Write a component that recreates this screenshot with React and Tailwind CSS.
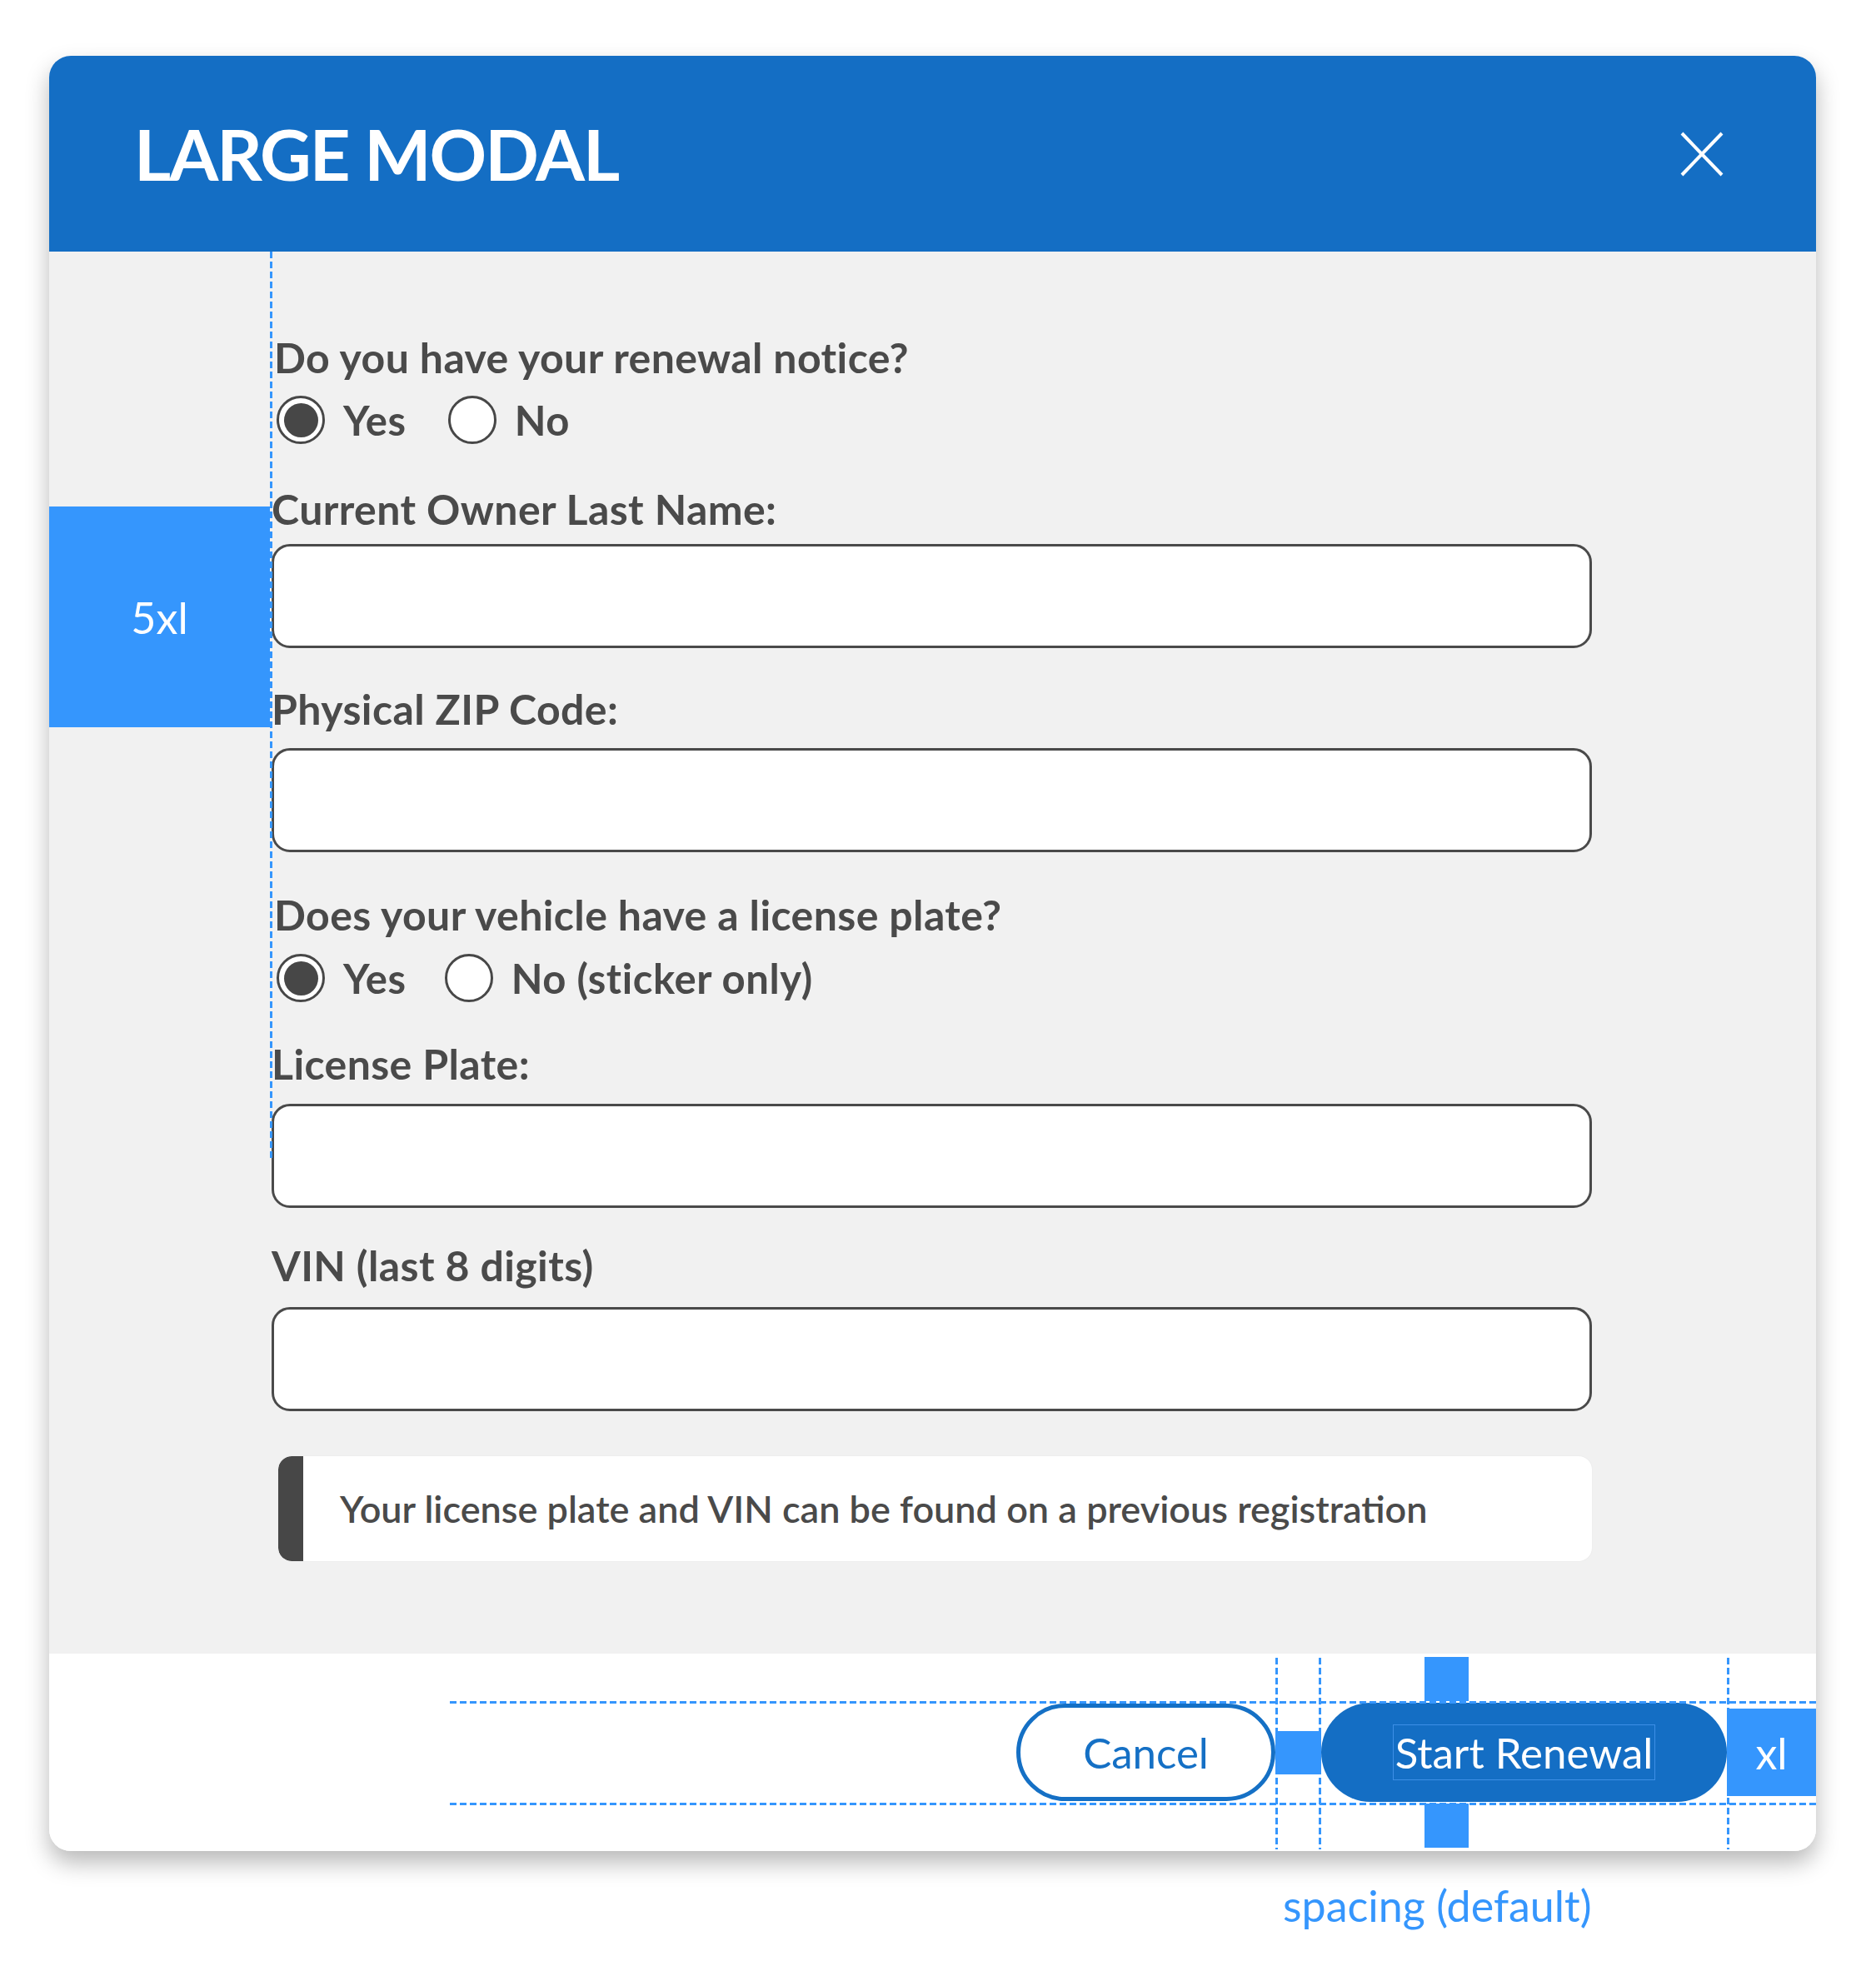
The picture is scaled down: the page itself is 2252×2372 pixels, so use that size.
import React from "react";

const Radio = ({ checked, label }) => (
  <div className="flex items-center gap-[22px]">
    <div className="w-[58px] h-[58px] rounded-full border-[3px] border-[#474747] bg-white flex items-center justify-center shrink-0">
      {checked && <div className="w-[41px] h-[41px] rounded-full bg-[#474747]" />}
    </div>
    <span className="text-[49px] leading-none font-bold tracking-[0.6px] text-[#4a4a4a]">{label}</span>
  </div>
);

const Label = ({ children, className = "" }) => (
  <div className={"text-[50px] leading-none font-bold tracking-[0.4px] text-[#4a4a4a] whitespace-nowrap " + className}>
    {children}
  </div>
);

const Input = ({ className = "" }) => (
  <div className={"h-[125px] w-full bg-white border-[3px] border-[#4a4a4a] rounded-[22px] " + className} />
);

const vDash =
  "absolute w-[3px] bg-[repeating-linear-gradient(to_bottom,#3596fd_0_8px,transparent_8px_12px)]";
const hDash =
  "absolute h-[3px] bg-[repeating-linear-gradient(to_right,#3596fd_0_8px,transparent_8px_12px)]";

export default function App() {
  return (
    <div className="w-[2252px] h-[2372px] bg-white flex flex-col pt-[67px] pl-[59px] font-[Lato,'Noto_Sans',sans-serif]">
      <div className="relative w-[2121px] h-[2155px] rounded-[26px] shadow-[0_14px_28px_rgba(0,0,0,0.28)] flex flex-col overflow-hidden">
        {/* Header */}
        <div className="h-[235px] shrink-0 bg-[#146ec4] flex items-center justify-between pl-[102px] pr-[111px]">
          <h1 className="text-[85px] leading-none font-bold text-white tracking-[-2px]">LARGE MODAL</h1>
          <svg width="52" height="54" viewBox="0 0 52 54" className="shrink-0">
            <line x1="2" y1="2" x2="50" y2="52" stroke="white" strokeWidth="4" />
            <line x1="50" y1="2" x2="2" y2="52" stroke="white" strokeWidth="4" />
          </svg>
        </div>

        {/* Body */}
        <div className="flex-1 bg-[#f1f1f1] flex flex-col pt-[102px] pl-[267px] pr-[269px]">
          <Label className="ml-[3px]">Do you have your renewal notice?</Label>
          <div className="mt-[21px] flex items-center gap-[50px] pl-[6px]">
            <Radio checked label="Yes" />
            <Radio label="No" />
          </div>
          <Label className="mt-[53px]">Current Owner Last Name:</Label>
          <Input className="mt-[17px]" />
          <Label className="mt-[48px]">Physical ZIP Code:</Label>
          <Input className="mt-[22px]" />
          <Label className="mt-[50px] ml-[3px]">Does your vehicle have a license plate?</Label>
          <div className="mt-[22px] flex items-center gap-[46px] pl-[6px]">
            <Radio checked label="Yes" />
            <Radio label="No (sticker only)" />
          </div>
          <Label className="mt-[49px]">License Plate:</Label>
          <Input className="mt-[23px]" />
          <Label className="mt-[44px]">VIN (last 8 digits)</Label>
          <Input className="mt-[25px]" />
          <div className="mt-[54px] ml-[8px] h-[126px] bg-white rounded-[16px] flex items-center overflow-hidden shadow-[0_0_2px_rgba(0,0,0,0.06)]">
            <div className="w-[30px] h-full bg-[#474747] rounded-l-[16px] shrink-0" />
            <span className="ml-[44px] text-[45px] leading-none font-semibold text-[#4a4a4a] whitespace-nowrap">
              Your license plate and VIN can be found on a previous registration
            </span>
          </div>
        </div>

        {/* Footer */}
        <div className="relative h-[237px] shrink-0 bg-white flex items-center justify-end">
          <button className="w-[311px] h-[117px] rounded-full border-[5px] border-[#1570c5] bg-white text-[#1570c5] text-[51px] leading-none flex items-center justify-center">
            Cancel
          </button>
          <div className="w-[55px] h-[52px] bg-[#3596fd]" />
          <button className="w-[487px] h-[119px] rounded-full bg-[#146ec4] text-white text-[51px] leading-none flex items-center justify-center">
            <span className="border border-[#3d8fe6] px-[2px] py-[7px]">Start Renewal</span>
          </button>
          <div className="w-[107px] h-[105px] bg-[#3596fd] text-white text-[52px] leading-none flex items-center justify-center">
            xl
          </div>

          {/* footer annotations */}
          <div className={hDash + " left-[481px] right-0 top-[57px]"} />
          <div className={hDash + " left-[481px] right-0 top-[179px]"} />
          <div className={vDash + " left-[1472px] top-[5px] bottom-[2px]"} />
          <div className={vDash + " left-[1524px] top-[5px] bottom-[2px]"} />
          <div className={vDash + " left-[2014px] top-[5px] bottom-[2px]"} />
          <div className="absolute left-[1651px] top-[4px] w-[53px] h-[53px] bg-[#3596fd]" />
          <div className="absolute left-[1651px] top-[180px] w-[53px] h-[53px] bg-[#3596fd]" />
        </div>

        {/* body annotations */}
        <div className={vDash + " left-[265px] top-[235px] h-[1090px]"} />
        <div className="absolute left-0 top-[541px] w-[265px] h-[265px] bg-[#3596fd] flex items-center justify-center text-white text-[52px] leading-none">
          5xl
        </div>
      </div>
      <div className="mt-[39px] ml-[1481px] text-[52px] leading-none text-[#3596fd] whitespace-nowrap">
        spacing (default)
      </div>
    </div>
  );
}
